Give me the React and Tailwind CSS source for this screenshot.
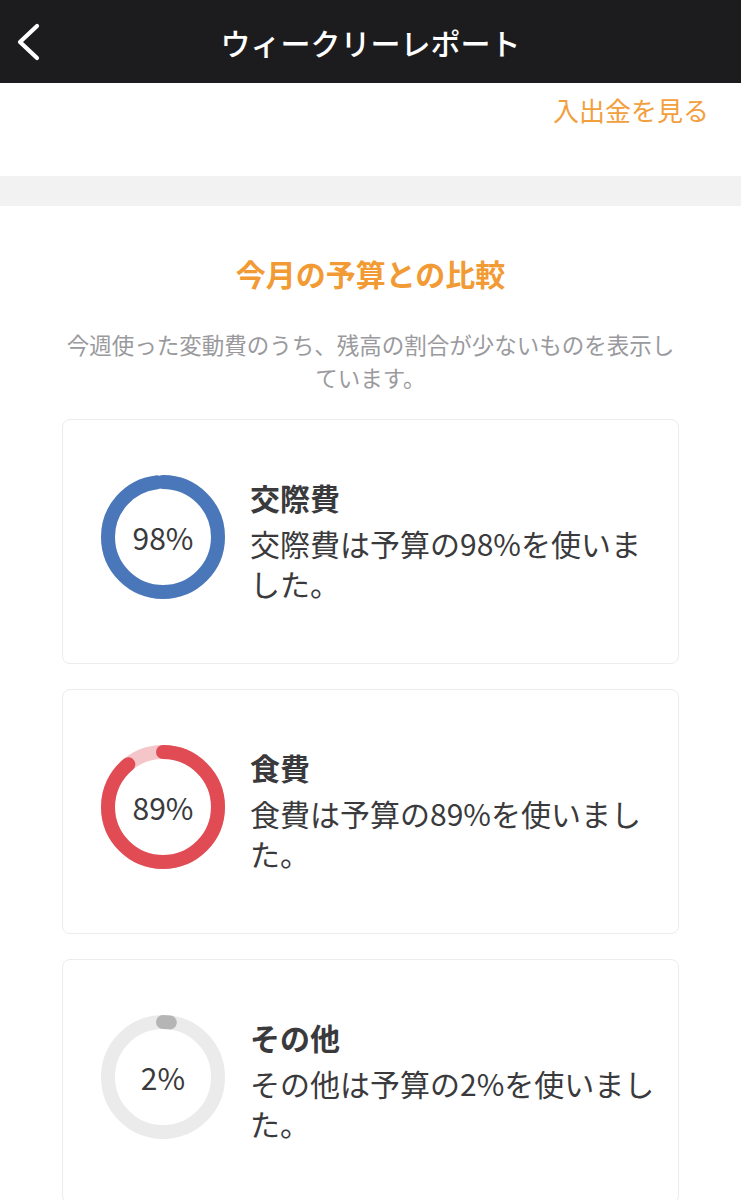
import React from "react";

const FONT = { fontFamily: '"Noto Sans CJK JP", "Noto Sans", sans-serif' };

function Donut({ pct, color, track, label }) {
  const r = 55;
  const c = 2 * Math.PI * r;
  const len = (pct / 100) * c;
  return (
    <div className="relative w-[124px] h-[124px] shrink-0">
      <svg width="124" height="124" viewBox="0 0 124 124" className="block">
        <circle cx="62" cy="62" r={r} fill="none" stroke={track} strokeWidth="14" />
        <circle
          cx="62"
          cy="62"
          r={r}
          fill="none"
          stroke={color}
          strokeWidth="14"
          strokeLinecap="round"
          strokeDasharray={`${len} ${c}`}
          transform="rotate(-90 62 62)"
        />
      </svg>
      <div className="absolute inset-0 flex items-center justify-center text-[30px] leading-none text-[#3a3a3c]">
        {label}
      </div>
    </div>
  );
}

function Card({ pct, color, track, title, desc }) {
  return (
    <div className="h-[245px] border border-[#ececec] rounded-[8px] bg-white flex items-start pt-[55px] pl-[38px] gap-[25px]">
      <Donut pct={pct} color={color} track={track} label={`${pct}%`} />
      <div className="w-[408px] pt-[2px]">
        <div className="text-[30px] leading-[40px] font-bold text-[#3a3a3c]">{title}</div>
        <div className="mt-[6px] text-[30px] leading-[40px] text-[#3a3a3c]">{desc}</div>
      </div>
    </div>
  );
}

export default function App() {
  return (
    <div className="w-[741px] h-[1200px] overflow-hidden bg-white" style={FONT}>
      <header className="h-[83px] bg-[#1c1c1e] grid grid-cols-[90px_1fr_90px] items-center">
        <div className="pl-[17px] flex items-center">
          <svg width="26" height="40" viewBox="0 0 26 40">
            <polyline
              points="20,4 3,20 20,36"
              fill="none"
              stroke="#ffffff"
              strokeWidth="4.2"
              strokeLinecap="round"
              strokeLinejoin="round"
            />
          </svg>
        </div>
        <h1 className="text-center text-white text-[30px] leading-none font-medium">
          ウィークリーレポート
        </h1>
        <div />
      </header>

      <div className="h-[93px] flex justify-end pr-[32px] pt-[9px]">
        <span className="text-[26px] leading-[36px] text-[#f2a03e]">入出金を見る</span>
      </div>

      <div className="h-[30px] bg-[#f2f2f2]" />

      <section className="px-[62px] pt-[47px]">
        <h2 className="text-center text-[30px] leading-[40px] font-bold text-[#f29a33]">
          今月の予算との比較
        </h2>
        <p className="mt-[35px] text-center text-[22.5px] leading-[33px] text-[#9a9a9e]">
          今週使った変動費のうち、残高の割合が少ないものを表示しています。
        </p>
        <div className="mt-[25px] flex flex-col gap-[25px]">
          <Card
            pct={98}
            color="#4a77b9"
            track="#dfe6f1"
            title="交際費"
            desc="交際費は予算の98%を使いました。"
          />
          <Card
            pct={89}
            color="#e04b54"
            track="#f4c5c9"
            title="食費"
            desc="食費は予算の89%を使いました。"
          />
          <Card
            pct={2}
            color="#b5b5b5"
            track="#ebebeb"
            title="その他"
            desc="その他は予算の2%を使いました。"
          />
        </div>
      </section>
    </div>
  );
}
